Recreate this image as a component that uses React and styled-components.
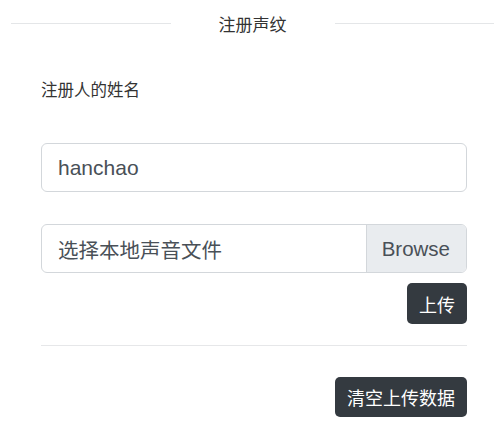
import React, { useState } from "react";
import styled, { createGlobalStyle } from "styled-components";

const GlobalStyle = createGlobalStyle`
  * { box-sizing: border-box; }
  body {
    margin: 0;
    background: #fff;
    font-family: "Liberation Sans", "Noto Sans CJK SC", sans-serif;
    color: #212529;
  }
`;

const Page = styled.div`
  width: 494px;
  min-height: 429px;
  overflow: hidden;
`;

const Header = styled.div`
  display: flex;
  align-items: center;
  gap: 48px;
  height: 46px;
  padding-left: 11px;
`;

const Rule = styled.div`
  flex: 1;
  height: 1px;
  background: #e4e6e8;
`;

const Title = styled.h2`
  margin: 0;
  font-size: 17px;
  font-weight: normal;
  color: #333;
  white-space: nowrap;
`;

const Form = styled.form`
  display: flex;
  flex-direction: column;
  padding: 32px 27px 0 41px;
`;

const Label = styled.label`
  font-size: 16.5px;
  line-height: 24px;
  color: #333;
  margin-bottom: 41px;
`;

const TextInput = styled.input`
  height: 49px;
  padding: 0 16px;
  border: 1px solid #d3d7db;
  border-radius: 6px;
  font-family: inherit;
  font-size: 21px;
  color: #495057;
  outline: none;
  margin-bottom: 32px;
`;

const FileField = styled.div`
  display: flex;
  height: 49px;
  border: 1px solid #d3d7db;
  border-radius: 6px;
  overflow: hidden;
`;

const FileName = styled.span`
  flex: 1;
  display: flex;
  align-items: center;
  padding-left: 16px;
  font-size: 20.5px;
  color: #495057;
`;

const BrowseButton = styled.span`
  display: flex;
  align-items: center;
  padding: 0 16px 0 15px;
  background: #e9ecef;
  border-left: 1px solid #d3d7db;
  font-size: 20.5px;
  color: #495057;
`;

const Actions = styled.div`
  display: flex;
  justify-content: flex-end;
  margin-top: ${(p) => p.$top}px;
`;

const DarkButton = styled.button`
  height: ${(p) => p.$height}px;
  padding: 0 12px;
  border: none;
  border-radius: 5px;
  background: #343a40;
  color: #fff;
  font-family: inherit;
  font-size: 18px;
  cursor: pointer;
`;

const Divider = styled.hr`
  margin: 21px 0 0;
  border: none;
  border-top: 1px solid #e6e7e9;
`;

export default function App() {
  const [name, setName] = useState("hanchao");

  return (
    <Page>
      <GlobalStyle />
      <Header>
        <Rule />
        <Title>注册声纹</Title>
        <Rule />
      </Header>
      <Form onSubmit={(e) => e.preventDefault()}>
        <Label htmlFor="name">注册人的姓名</Label>
        <TextInput
          id="name"
          type="text"
          value={name}
          onChange={(e) => setName(e.target.value)}
        />
        <FileField>
          <FileName>选择本地声音文件</FileName>
          <BrowseButton>Browse</BrowseButton>
        </FileField>
        <Actions $top={10}>
          <DarkButton type="submit" $height={41}>上传</DarkButton>
        </Actions>
        <Divider />
        <Actions $top={31}>
          <DarkButton type="button" $height={40}>清空上传数据</DarkButton>
        </Actions>
      </Form>
    </Page>
  );
}
